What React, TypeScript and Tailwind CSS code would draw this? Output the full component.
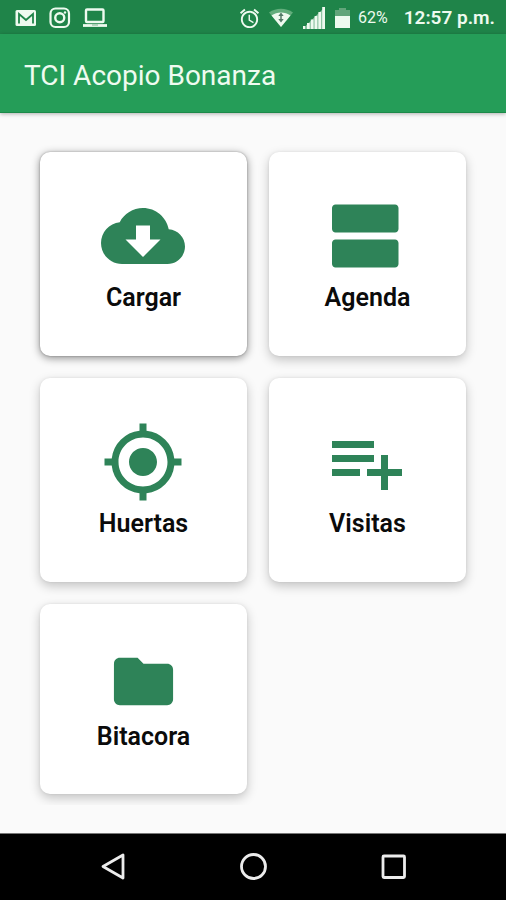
import type { ReactNode } from "react";

type Tile = { label: string; path: string; short?: boolean; raised?: boolean };

const tiles: Tile[] = [
  {
    label: "Cargar",
    raised: true,
    path: "M19.35 10.04C18.67 6.59 15.64 4 12 4 9.11 4 6.6 5.64 5.35 8.04 2.34 8.36 0 10.91 0 14c0 3.31 2.69 6 6 6h13c2.76 0 5-2.24 5-5 0-2.64-2.05-4.78-4.65-4.96zM17 13l-5 5-5-5h3V9h4v4h3z",
  },
  {
    label: "Agenda",
    path: "M20 13H3c-.55 0-1 .45-1 1v6c0 .55.45 1 1 1h17c.55 0 1-.45 1-1v-6c0-.55-.45-1-1-1zm0-10H3c-.55 0-1 .45-1 1v6c0 .55.45 1 1 1h17c.55 0 1-.45 1-1V4c0-.55-.45-1-1-1z",
  },
  {
    label: "Huertas",
    path: "M12 8c-2.21 0-4 1.79-4 4s1.79 4 4 4 4-1.79 4-4-1.79-4-4-4zm8.94 3A8.994 8.994 0 0 0 13 3.06V1h-2v2.06A8.994 8.994 0 0 0 3.06 11H1v2h2.06A8.994 8.994 0 0 0 11 20.94V23h2v-2.06A8.994 8.994 0 0 0 20.94 13H23v-2h-2.06zM12 19c-3.87 0-7-3.13-7-7s3.13-7 7-7 7 3.13 7 7-3.13 7-7 7z",
  },
  {
    label: "Visitas",
    path: "M14 10H2v2h12v-2zm0-4H2v2h12V6zm4 8v-4h-2v4h-4v2h4v4h2v-4h4v-2h-4zM2 16h8v-2H2v2z",
  },
  {
    label: "Bitacora",
    short: true,
    path: "M10 4H4c-1.1 0-1.99.9-1.99 2L2 18c0 1.1.9 2 2 2h16c1.1 0 2-.9 2-2V8c0-1.1-.9-2-2-2h-8l-2-2z",
  },
];

function TileCard({ label, path, short, raised }: Tile) {
  return (
    <button
      type="button"
      className={`flex flex-col items-center justify-center gap-1 rounded-[10px] bg-white ${
        short ? "h-[190px]" : "h-[204px]"
      } ${
        raised
          ? "shadow-[0_2px_8px_rgba(0,0,0,0.45),0_0_2px_rgba(0,0,0,0.3)]"
          : "shadow-[0_4px_11px_rgba(0,0,0,0.22),0_0_3px_rgba(0,0,0,0.08)]"
      }`}
    >
      <svg
        viewBox="0 0 24 24"
        className={`fill-[#2e8358] ${short ? "size-[71px]" : "size-[84px]"}`}
        aria-hidden="true"
      >
        <path d={path} />
      </svg>
      <span className="text-[25px] leading-8 font-semibold text-[#0b0b0b]">{label}</span>
    </button>
  );
}

function StatusBar() {
  return (
    <div className="flex h-[34px] items-center justify-between bg-[#1f8449] pt-[2px] pr-[11px] pl-[15px] text-[#eefaef]">
      <div className="flex items-center gap-3">
        <svg width="22" height="18" viewBox="0 0 22 18" aria-hidden="true">
          <rect x="0.5" y="1" width="20.5" height="16" rx="1.5" fill="currentColor" />
          <path d="M4 14.5V5l7 6 7-6v9.5" fill="none" stroke="#1f8449" strokeWidth="1.8" />
        </svg>
        <svg width="22" height="22" viewBox="0 0 22 22" fill="none" stroke="currentColor" aria-hidden="true">
          <rect x="1.5" y="1.5" width="18.5" height="18.5" rx="5" strokeWidth="2.2" />
          <circle cx="10.75" cy="10.75" r="4.5" strokeWidth="2.4" />
          <circle cx="16" cy="5.5" r="1.2" fill="currentColor" stroke="none" />
        </svg>
        <svg width="24" height="20" viewBox="0 0 24 20" fill="none" stroke="currentColor" aria-hidden="true">
          <rect x="3" y="1.5" width="17.5" height="12.5" rx="1" strokeWidth="2.4" />
          <path d="M0 17.5h24" strokeWidth="2.8" />
          <path d="M9 17h6" stroke="#8fbf9f" strokeWidth="1.2" />
        </svg>
      </div>
      <div className="flex items-center">
        <svg width="23" height="23" viewBox="0 0 24 24" fill="currentColor" className="mr-2" aria-hidden="true">
          <path d="M22 5.72l-4.6-3.86-1.29 1.53 4.6 3.86L22 5.72zM7.88 3.39L6.6 1.86 2 5.71l1.29 1.53 4.59-3.85zM12.5 8H11v6l4.75 2.85.75-1.23-4-2.37V8zM12 4c-4.97 0-9 4.03-9 9s4.02 9 9 9c4.97 0 9-4.03 9-9s-4.03-9-9-9zm0 16c-3.87 0-7-3.13-7-7s3.13-7 7-7 7 3.13 7 7-3.13 7-7 7z" />
        </svg>
        <svg width="24" height="20" viewBox="0 0 24 20" className="mr-[10px]" aria-hidden="true">
          <path d="M0 4.5C7-.5 17-.5 24 4.5L12 19z" fill="#62ad7c" />
          <path d="M2.5 7.5C8 3.5 16 3.5 21.5 7.5L12 19z" fill="currentColor" />
          <path d="M12 4.5l2.7 3.5H9.3zM12 14.5L9.3 11h5.4z" fill="#557b68" />
          <path d="M12 7v5" stroke="#557b68" strokeWidth="1.5" />
        </svg>
        <svg width="22" height="22" viewBox="0 0 22 22" fill="currentColor" className="mr-[10px]" aria-hidden="true">
          <path d="M0 19h2.5v3H0zM4 16h2.7v6H4zM7.8 12.5h2.7V22H7.8zM11.6 9h2.7v13h-2.7zM15.4 5h2.7v17h-2.7zM19.2 0H22v22h-2.8z" />
          <path d="M3 22v-3.5L22 0v22z" opacity="0.5" />
        </svg>
        <svg width="15" height="20" viewBox="0 0 15 20" className="mr-2" aria-hidden="true">
          <path d="M4 0h7v2h4v7H0V2h4z" fill="#62a57a" />
          <path d="M0 8h15v12H0z" fill="currentColor" />
        </svg>
        <span className="mr-4 text-base">62%</span>
        <span className="text-[19px] font-semibold">12:57 p.m.</span>
      </div>
    </div>
  );
}

function NavButton({ label, children }: { label: string; children: ReactNode }) {
  return (
    <button type="button" aria-label={label} className="flex h-12 w-[140px] items-center justify-center">
      <svg
        width="30"
        height="30"
        viewBox="0 0 30 30"
        fill="none"
        stroke="#ececec"
        strokeWidth="2.8"
        strokeLinejoin="round"
        aria-hidden="true"
      >
        {children}
      </svg>
    </button>
  );
}

export default function App() {
  return (
    <div className="flex min-h-screen flex-col bg-[#fafafa] font-[Roboto,sans-serif]">
      <StatusBar />
      <header className="flex h-[79px] items-center border-b border-[#1c8a49] bg-[#259d58] px-6 pt-1.5 shadow-[0_1px_4px_rgba(0,0,0,0.3)]">
        <h1 className="text-[28px] text-[#effbf0]">TCI Acopio Bonanza</h1>
      </header>
      <main className="flex-1 px-7 pt-7">
        <div className="grid grid-cols-[208fr_198fr] gap-x-[22px] gap-y-[22px] overflow-hidden px-3 pt-[11px] pb-[11px]">
          {tiles.map((tile) => (
            <TileCard key={tile.label} {...tile} />
          ))}
        </div>
      </main>
      <nav className="flex h-[67px] items-center justify-center border-t border-[#777] bg-black">
        <NavButton label="Atrás">
          <path d="M25 3v23L5 14.5z" />
        </NavButton>
        <NavButton label="Inicio">
          <circle cx="15.5" cy="14.5" r="12" />
        </NavButton>
        <NavButton label="Recientes">
          <rect x="5" y="4" width="21.5" height="21.5" rx="1" />
        </NavButton>
      </nav>
    </div>
  );
}
